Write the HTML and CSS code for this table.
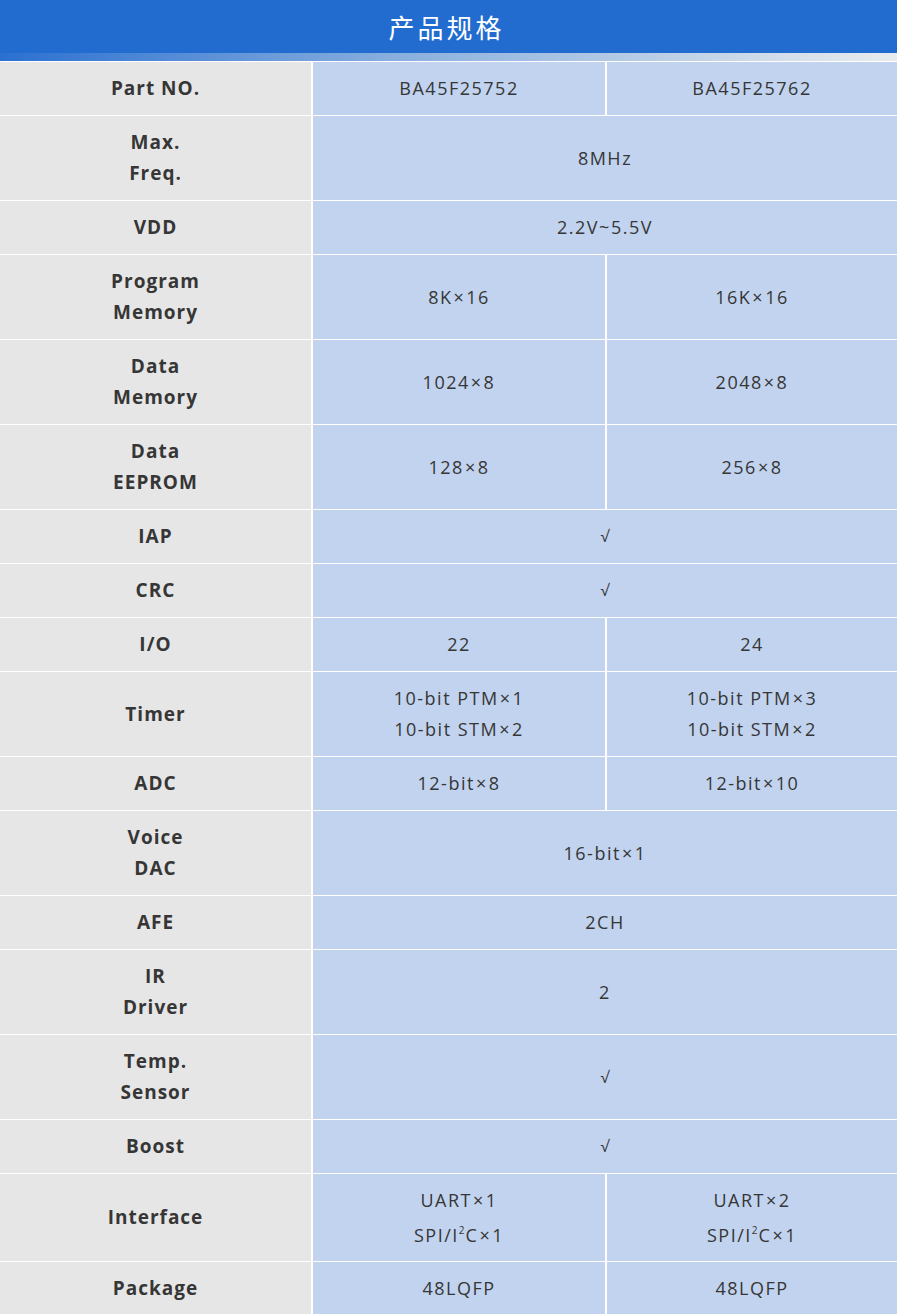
FILE: index.html
```html
<!DOCTYPE html>
<html lang="zh-CN">
<head>
<meta charset="utf-8">
<title>产品规格</title>
<link rel="stylesheet" href="styles.css">
</head>
<body>
<div class="page">
  <header class="head">
    <h1 class="title">产品规格</h1>
  </header>
  <div class="strip"></div>
  <table class="spec">
    <colgroup><col class="c-label"><col class="c-mid"><col class="c-right"></colgroup>
    <tbody>
      <tr class="s"><th>Part NO.</th><td>BA45F25752</td><td>BA45F25762</td></tr>
      <tr class="t"><th>Max.<br>Freq.</th><td colspan="2">8MHz</td></tr>
      <tr class="s"><th>VDD</th><td colspan="2">2.2V~5.5V</td></tr>
      <tr class="t"><th>Program<br>Memory</th><td>8K<span class="x">×</span>16</td><td>16K<span class="x">×</span>16</td></tr>
      <tr class="t"><th>Data<br>Memory</th><td>1024<span class="x">×</span>8</td><td>2048<span class="x">×</span>8</td></tr>
      <tr class="t"><th>Data<br>EEPROM</th><td>128<span class="x">×</span>8</td><td>256<span class="x">×</span>8</td></tr>
      <tr class="s"><th>IAP</th><td colspan="2" class="chk">√</td></tr>
      <tr class="s"><th>CRC</th><td colspan="2" class="chk">√</td></tr>
      <tr class="s"><th>I/O</th><td>22</td><td>24</td></tr>
      <tr class="t"><th>Timer</th><td>10-bit PTM<span class="x">×</span>1<br>10-bit STM<span class="x">×</span>2</td><td>10-bit PTM<span class="x">×</span>3<br>10-bit STM<span class="x">×</span>2</td></tr>
      <tr class="s"><th>ADC</th><td>12-bit<span class="x">×</span>8</td><td>12-bit<span class="x">×</span>10</td></tr>
      <tr class="t"><th>Voice<br>DAC</th><td colspan="2">16-bit<span class="x">×</span>1</td></tr>
      <tr class="s"><th>AFE</th><td colspan="2">2CH</td></tr>
      <tr class="t"><th>IR<br>Driver</th><td colspan="2">2</td></tr>
      <tr class="t"><th>Temp.<br>Sensor</th><td colspan="2" class="chk">√</td></tr>
      <tr class="s"><th>Boost</th><td colspan="2" class="chk">√</td></tr>
      <tr class="i"><th>Interface</th><td>UART<span class="x">×</span>1<br>SPI/I<sup>2</sup>C<span class="x">×</span>1</td><td>UART<span class="x">×</span>2<br>SPI/I<sup>2</sup>C<span class="x">×</span>1</td></tr>
      <tr class="s"><th>Package</th><td>48LQFP</td><td>48LQFP</td></tr>
    </tbody>
  </table>
</div>
</body>
</html>
```

FILE: styles.css
```css
html, body {
  margin: 0;
  padding: 0;
  background: #ffffff;
}

.page {
  width: 897px;
  overflow: hidden;
  font-family: "Open Sans", "Noto Sans", "Noto Sans CJK SC", sans-serif;
  color: #363636;
}

.head {
  height: 53px;
  background: #226cd0;
  display: flex;
  align-items: center;
  justify-content: center;
}

.title {
  margin: 0 4px 0 0;
  font-family: "Noto Sans CJK SC", sans-serif;
  font-weight: 400;
  font-size: 26px;
  letter-spacing: 3px;
  color: #ffffff;
  line-height: 1;
}

.strip {
  height: 8px;
  background: linear-gradient(to right, #2b70d1 0%, #8ab0de 45%, #e8ecee 100%);
}

.spec {
  width: 897px;
  border-collapse: collapse;
  table-layout: fixed;
}

.c-label { width: 312px; }
.c-mid { width: 294px; }
.c-right { width: 291px; }

.spec th,
.spec td {
  padding: 0;
  border-top: 1px solid #ffffff;
  text-align: center;
  vertical-align: middle;
  line-height: 31px;
}

.spec th {
  background: #e6e6e6;
  font-weight: 700;
  font-size: 19px;
  letter-spacing: 1px;
  color: #363636;
}

.spec td {
  background: #c1d3ee;
  font-weight: 400;
  font-size: 18px;
  letter-spacing: 1.5px;
  border-left: 2px solid #ffffff;
}

.spec .x {
  margin: 0 1px 0 1px;
}

.spec tr.s th, .spec tr.s td { height: 53px; }
.spec tr.t th, .spec tr.t td { height: 84px; }
.spec tr.i th, .spec tr.i td { height: 87px; }
.spec tr.i td { line-height: 35px; }

.spec td.chk {
  font-size: 16px;
  letter-spacing: 0;
}

.spec sup {
  font-size: 10px;
  line-height: 0;
  letter-spacing: 0;
  vertical-align: 8px;
  margin-right: 1px;
}
```
